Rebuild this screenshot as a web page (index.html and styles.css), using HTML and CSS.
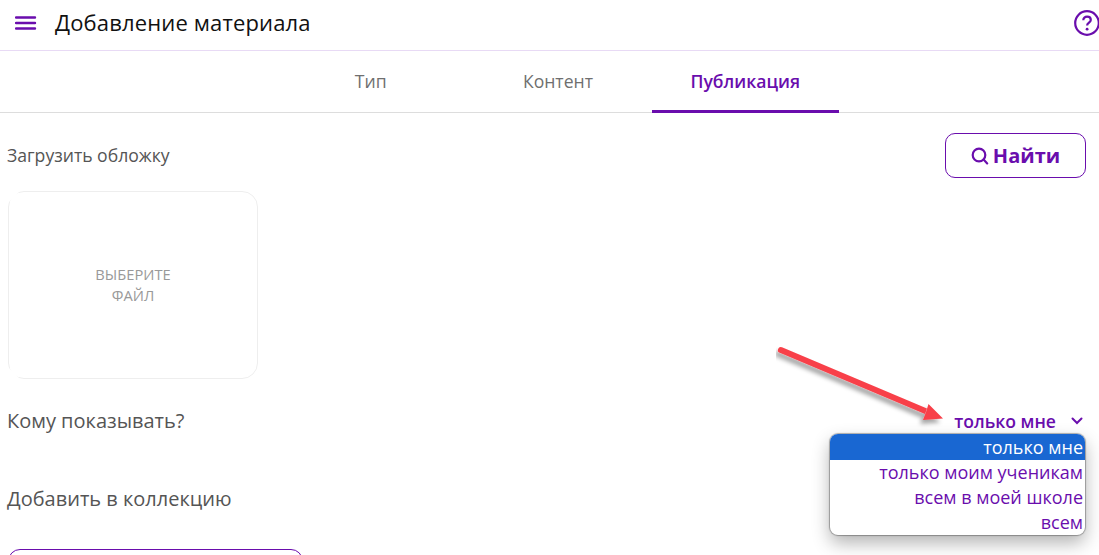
FILE: index.html
```html
<!DOCTYPE html>
<html lang="ru">
<head>
    <meta charset="UTF-8">
    <title>Добавление материала</title>
    <link rel="stylesheet" href="styles.css">
</head>
<body>
    <header class="top-bar">
        <svg class="menu-icon" width="22" height="16" viewBox="0 0 22 16">
            <path d="M1 2.5h19M1 8h19M1 13.5h19" stroke="#6a0dad" stroke-width="2.4" stroke-linecap="round" fill="none"/>
        </svg>
        <h1 class="page-title">Добавление материала</h1>
        <svg class="help-icon" width="26" height="26" viewBox="0 0 26 26">
            <circle cx="13" cy="13" r="11.8" stroke="#6a0dad" stroke-width="2.2" fill="none"/>
            <path d="M9.3 10.2c0-2.2 1.7-3.6 3.8-3.6s3.7 1.3 3.7 3.3c0 2.6-3.7 2.8-3.7 5.6" stroke="#6a0dad" stroke-width="2.2" fill="none"/>
            <circle cx="13.1" cy="19.2" r="1.4" fill="#6a0dad"/>
        </svg>
    </header>

    <nav class="tabs">
        <div class="tab">Тип</div>
        <div class="tab">Контент</div>
        <div class="tab active">Публикация</div>
    </nav>

    <main class="content">
        <div class="cover-row">
            <span class="label-small">Загрузить обложку</span>
            <button class="find-btn">
                <svg width="18" height="18" viewBox="0 0 18 18">
                    <circle cx="8" cy="8" r="6.3" stroke="#6a0dad" stroke-width="2.2" fill="none"/>
                    <path d="M12.6 12.6l3.6 3.8" stroke="#6a0dad" stroke-width="2.2" stroke-linecap="round"/>
                </svg>
                Найти
            </button>
        </div>

        <div class="cover-box">ВЫБЕРИТЕ<br>ФАЙЛ</div>

        <div class="show-row">
            <span class="label">Кому показывать?</span>
            <div class="select-value">
                только мне
                <svg width="12" height="8" viewBox="0 0 12 8">
                    <path d="M1.5 1.5L6 6l4.5-4.5" stroke="#6a0dad" stroke-width="2" stroke-linecap="round" fill="none"/>
                </svg>
            </div>
        </div>

        <div class="label collection-label">Добавить в коллекцию</div>
        <div class="collection-btn"></div>
    </main>

    <ul class="dropdown">
        <li class="selected">только мне</li>
        <li>только моим ученикам</li>
        <li>всем в моей школе</li>
        <li>всем</li>
    </ul>

    <svg class="arrow" width="190" height="90" viewBox="0 0 190 90">
        <defs>
            <filter id="arrow-shadow" x="-10%" y="-20%" width="120%" height="150%">
                <feDropShadow dx="-3" dy="4" stdDeviation="2" flood-color="#000" flood-opacity="0.35"/>
            </filter>
        </defs>
        <g filter="url(#arrow-shadow)" fill="#f8414a">
            <path d="M6 1.2L151 62.5l-2 5.5L3.8 6.8a3 3 0 0 1 2.2-5.6z"/>
            <path d="M167 72.5l-20 1.5 3-8 2.5-8z"/>
        </g>
    </svg>
</body>
</html>
```

FILE: styles.css
```css
html, body {
    height: 100%;
    overflow: hidden;
}

body {
    font-family: "Open Sans", "Noto Sans", sans-serif;
    background-color: #fff;
    margin: 0;
    padding: 0;
    position: relative;
}

.top-bar {
    display: flex;
    align-items: center;
    height: 45px;
    padding: 0 0 5px 15px;
    border-bottom: 1px solid #e8daf5;
}

.menu-icon {
    flex: none;
}

.page-title {
    flex: 1;
    margin: -2px 0 0 18px;
    font-size: 22px;
    font-weight: 400;
    color: #111;
    letter-spacing: 0.15px;
}

.help-icon {
    flex: none;
    margin-right: -1px;
}

.tabs {
    display: flex;
    height: 61px;
    padding-left: 277px;
    border-bottom: 1px solid #ddd;
}

.tab {
    width: 187.3px;
    display: flex;
    align-items: center;
    justify-content: center;
    font-size: 17.6px;
    color: #6f6f6f;
    box-sizing: border-box;
    padding-bottom: 2px;
}

.tab.active {
    color: #6a0dad;
    font-weight: 600;
    border-bottom: 3px solid #6a0dad;
    margin-bottom: -1px;
    height: 62px;
    padding-top: 1px;
    padding-bottom: 0;
}

.content {
    padding: 20px 13px 0 7px;
}

.cover-row {
    display: flex;
    justify-content: space-between;
    align-items: center;
}

.label-small {
    font-size: 17.6px;
    color: #555;
    margin-top: -1px;
}

.find-btn {
    display: flex;
    align-items: center;
    justify-content: center;
    gap: 4px;
    width: 141px;
    height: 45px;
    background: #fff;
    border: 1px solid #6a0dad;
    border-radius: 10px;
    font-family: inherit;
    font-size: 20px;
    font-weight: 700;
    color: #6a0dad;
    padding: 0;
}

.cover-box {
    display: flex;
    align-items: center;
    justify-content: center;
    text-align: center;
    box-sizing: border-box;
    width: 250px;
    height: 188px;
    margin: 13px 0 0 1px;
    border: 1px solid #eee;
    border-radius: 16px;
    clip-path: polygon(12px 0, 100% 0, 100% 100%, 12px 100%, 0 calc(100% - 12px), 0 12px);
    font-size: 14.7px;
    line-height: 21px;
    color: #999;
}

.show-row {
    display: flex;
    justify-content: space-between;
    align-items: center;
    margin-top: 28px;
}

.label {
    font-size: 20px;
    color: #555;
}

.select-value {
    display: flex;
    align-items: center;
    gap: 15px;
    font-size: 17.6px;
    font-weight: 600;
    color: #6a0dad;
    padding-right: 3px;
}

.collection-label {
    margin-top: 51px;
}

.collection-btn {
    width: 295px;
    height: 40px;
    margin: 37px 0 0 1px;
    border: 1px solid #6a0dad;
    border-radius: 12px;
    box-sizing: border-box;
}

.dropdown {
    position: absolute;
    left: 830px;
    top: 434px;
    width: 255px;
    margin: 0;
    padding: 0;
    list-style: none;
    background: #fff;
    border-radius: 8px;
    overflow: hidden;
    box-shadow: 0 0 1px 1px rgba(0, 0, 0, 0.3), 0 8px 18px rgba(0, 0, 0, 0.3);
}

.dropdown li {
    height: 25px;
    line-height: 25px;
    padding-right: 2px;
    text-align: right;
    font-size: 18px;
    color: #6a0dad;
}

.dropdown li.selected {
    background: #1967d2;
    color: #fff;
    height: 26px;
    line-height: 26px;
}

.arrow {
    position: absolute;
    left: 776px;
    top: 346px;
}
```
